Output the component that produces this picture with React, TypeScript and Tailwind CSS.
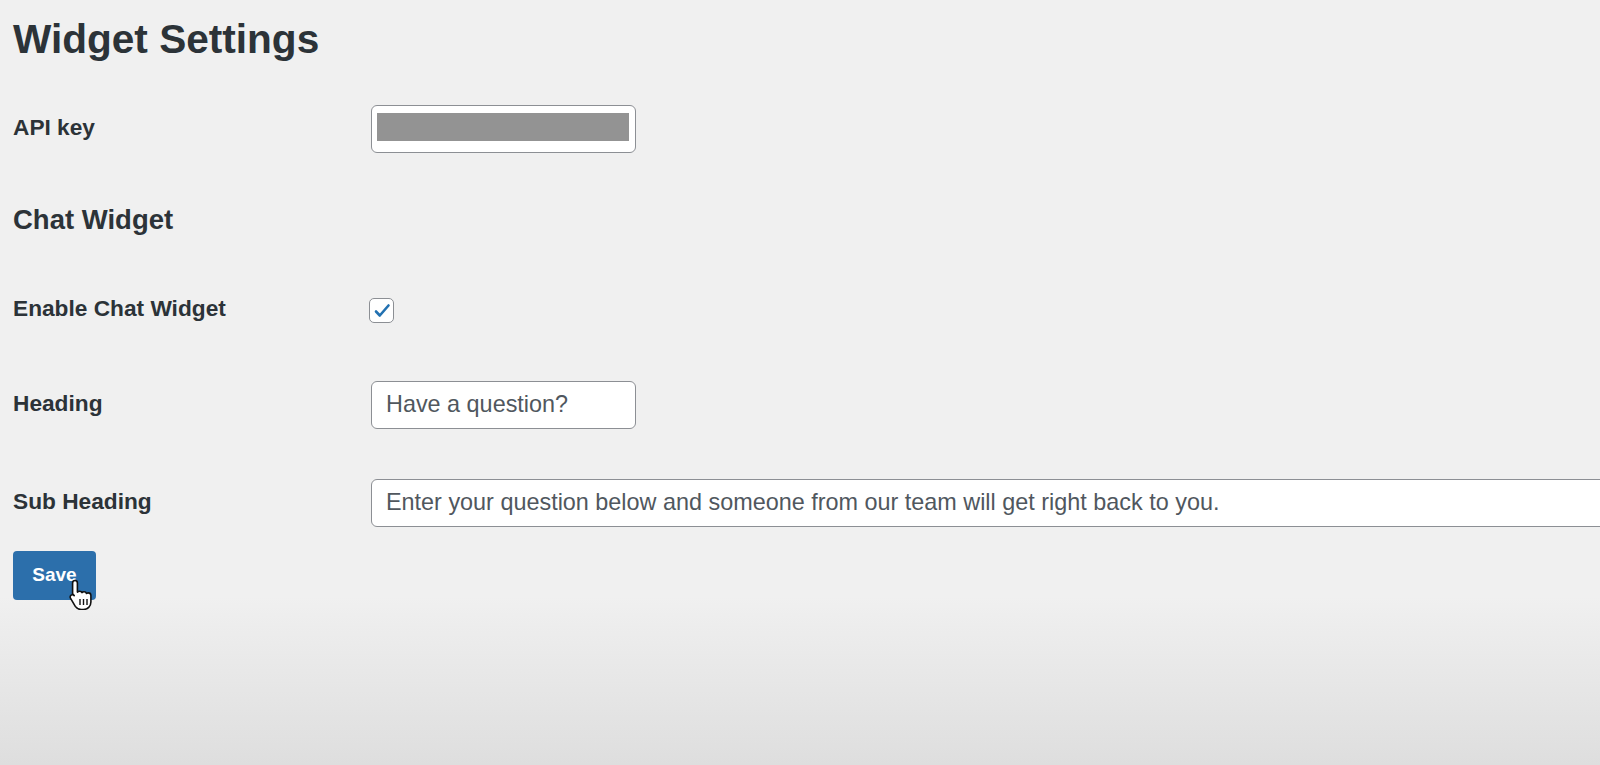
import React from 'react';

const labelFont = { fontFamily: '"Liberation Sans", Arial, sans-serif' };

function Label({ children }: { children: React.ReactNode }) {
  return (
    <div className="mb-[4px] w-[358px] shrink-0 text-[22.7px] font-bold text-[#2c3338]">
      {children}
    </div>
  );
}

function TextBox({ value, className }: { value: string; className: string }) {
  return (
    <div
      className={`h-[48px] shrink-0 flex items-center rounded-[6px] border border-[#8c8f94] bg-white pl-[14px] text-[23.4px] text-[#50575e] whitespace-nowrap ${className}`}
    >
      {value}
    </div>
  );
}

function HandCursor() {
  return (
    <svg
      className="absolute left-[68px] top-[578px]"
      width="28"
      height="32"
      viewBox="0 0 28 32"
    >
      <path
        d="M7 2.5c1.4 0 2.4 1 2.4 2.4v9.2c.6-.6 1.4-.9 2.2-.9 1.1 0 2 .6 2.4 1.4.5-.5 1.2-.8 2-.8 1.2 0 2.2.7 2.5 1.7.5-.4 1.1-.6 1.8-.6 1.5 0 2.6 1.1 2.6 2.6v6.4c0 4.4-3.2 7.6-7.6 7.6h-2.1c-2.6 0-4.4-1-5.9-3.1L2.6 20.4c-.8-1.2-.5-2.6.6-3.3 1-.6 2.2-.4 3 .5l-1.6-1.8V4.9C4.6 3.5 5.6 2.5 7 2.5z"
        fill="#fff"
        stroke="#111"
        strokeWidth="1.6"
        strokeLinejoin="round"
      />
      <path d="M12 21v6M15.5 21v6M19 21v6" stroke="#111" strokeWidth="1.4" />
    </svg>
  );
}

export default function App() {
  return (
    <div
      className="relative h-[765px] w-[1600px] overflow-hidden bg-[linear-gradient(to_bottom,#f0f0f0_0%,#f0f0f0_78%,#dedede_100%)]"
      style={labelFont}
    >
      <div className="flex flex-col px-[13px]">
        <h1 className="mt-[15px] h-[48px] text-[40.6px] font-bold leading-[48px] text-[#2c3338]">
          Widget Settings
        </h1>

        <div className="mt-[42px] flex h-[48px] items-center">
          <Label>API key</Label>
          <div className="h-[48px] w-[265px] shrink-0 rounded-[6px] border border-[#8c8f94] bg-white pl-[5px] pt-[7px]">
            <div className="h-[28px] w-[252px] bg-[#939393]" />
          </div>
        </div>

        <h2 className="mt-[51px] h-[32px] text-[27.5px] font-bold leading-[32px] text-[#2c3338]">
          Chat Widget
        </h2>

        <div className="mt-[62px] flex h-[25px] items-center">
          <Label>Enable Chat Widget</Label>
          <div className="-ml-[2px] flex h-[25px] w-[25px] items-center justify-center rounded-[5px] border-[1.5px] border-[#8c8f94] bg-white">
            <svg width="18" height="18" viewBox="0 0 18 18">
              <path
                d="M3 9.5l3.8 4L15.5 3.5"
                fill="none"
                stroke="#2271b1"
                strokeWidth="2.6"
                strokeLinecap="round"
                strokeLinejoin="round"
              />
            </svg>
          </div>
        </div>

        <div className="mt-[58px] flex h-[48px] items-center">
          <Label>Heading</Label>
          <TextBox value="Have a question?" className="w-[265px]" />
        </div>

        <div className="mt-[50px] flex h-[48px] items-center">
          <Label>Sub Heading</Label>
          <TextBox
            value="Enter your question below and someone from our team will get right back to you."
            className="w-[1300px]"
          />
        </div>

        <div className="mt-[24px]">
          <button className="h-[49px] w-[83px] rounded-[4px] bg-[#2c6fab] text-[19px] font-bold text-white">
            Save
          </button>
        </div>
      </div>
      <HandCursor />
    </div>
  );
}
